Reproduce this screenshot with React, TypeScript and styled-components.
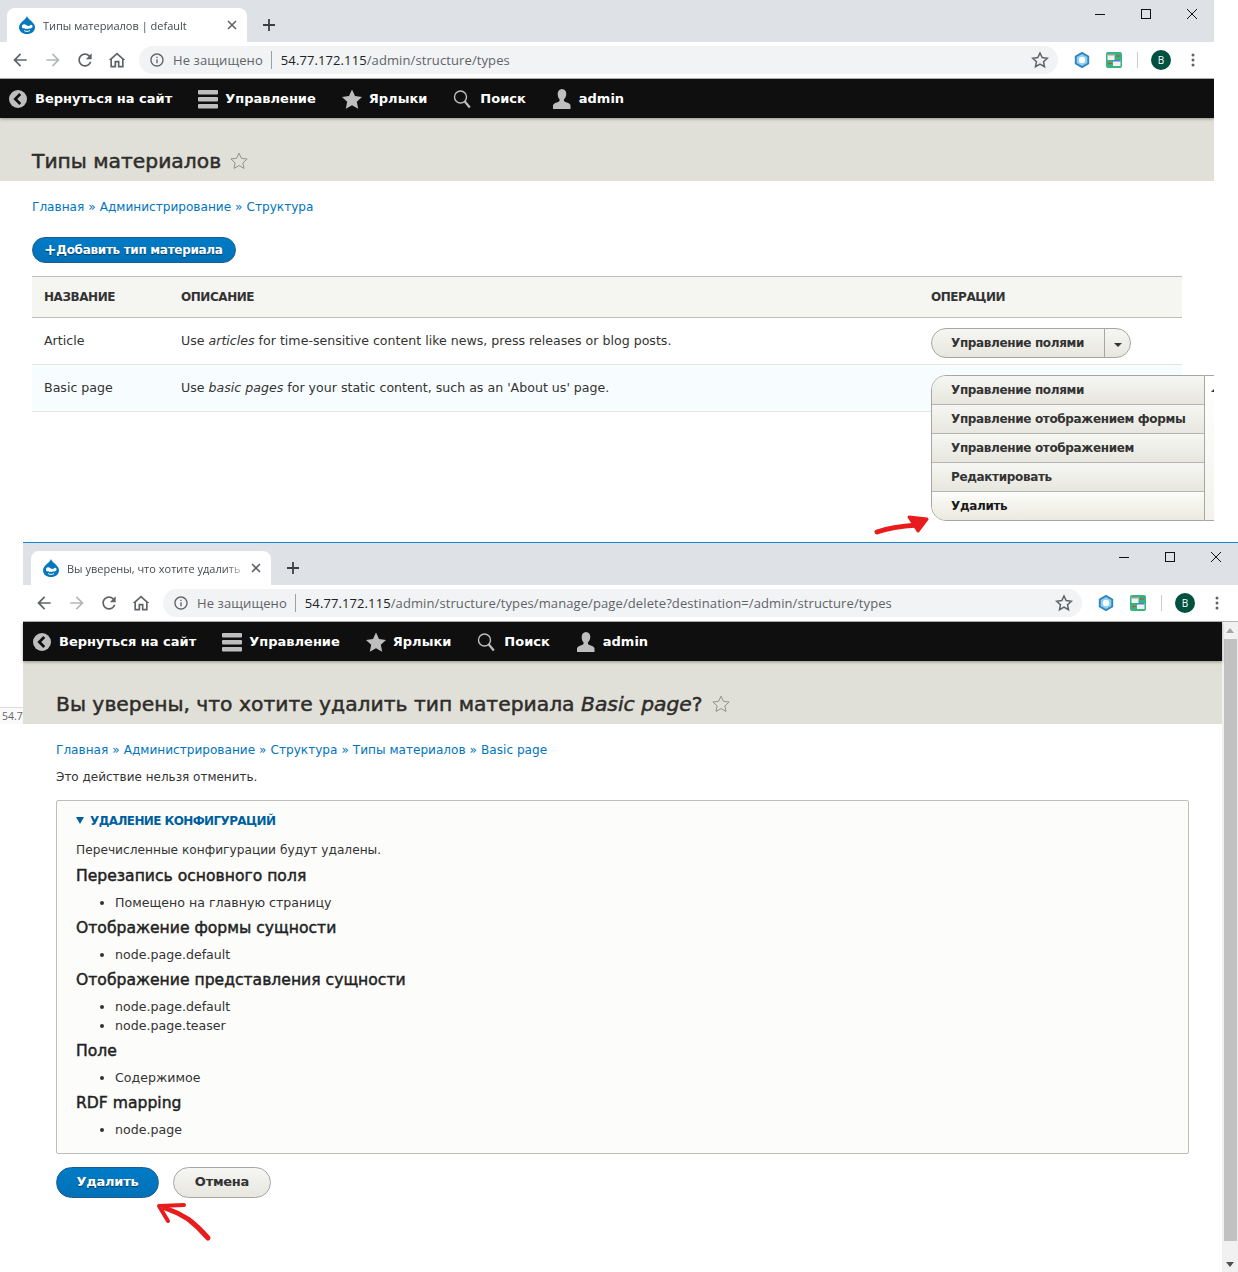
import React from 'react'
import styled, { createGlobalStyle } from 'styled-components'

const GlobalStyle = createGlobalStyle`
  html, body {
    margin: 0;
    padding: 0;
    background: #fff;
  }
  * {
    box-sizing: border-box;
  }
`

const Sheet = styled.div`
  position: relative;
  width: 1238px;
  height: 1272px;
  overflow: hidden;
  background: #fff;
  font-family: 'DejaVu Sans', Verdana, sans-serif;
  color: #333;
`

const BackWindow = styled.section`
  width: 1214px;
  height: 542px;
  overflow: hidden;
  display: flex;
  flex-direction: column;
`

const FrontWindow = styled.section`
  position: relative;
  width: 1215px;
  height: 730px;
  margin-left: 23px;
  border-top: 1px solid #0f86d8;
  display: flex;
  flex-direction: column;
  background: #fff;
`

const TabStrip = styled.div<{ $shift: number }>`
  flex: none;
  height: 42px;
  background: #dee1e6;
  display: flex;
  align-items: flex-end;
  padding-left: ${({ $shift }) => 7 + $shift}px;
`

const Tab = styled.div`
  width: 240px;
  height: 34px;
  background: #fff;
  border-radius: 8px 8px 0 0;
  display: flex;
  align-items: center;
  padding: 0 10px 0 12px;
  gap: 8px;
`

const TabTitle = styled.span`
  flex: 1;
  min-width: 0;
  font: 11px 'Open Sans', 'Noto Sans', sans-serif;
  color: #45494d;
  white-space: nowrap;
  overflow: hidden;
  -webkit-mask-image: linear-gradient(90deg, #000 90%, rgba(0, 0, 0, 0.25));
  mask-image: linear-gradient(90deg, #000 90%, rgba(0, 0, 0, 0.25));
`

const TabClose = styled.svg`
  flex: none;
  width: 10px;
  height: 10px;
  stroke: #5f6368;
  stroke-width: 1.6;
`

const NewTab = styled.svg`
  flex: none;
  width: 14px;
  height: 14px;
  margin: 0 0 10px 15px;
  stroke: #3c4043;
  stroke-width: 1.8;
`

const WindowControls = styled.div`
  margin-left: auto;
  align-self: flex-start;
  display: flex;
  padding-top: 8px;
  padding-right: 16px;
`

const WindowButton = styled.svg`
  width: 12px;
  height: 12px;
  stroke: #111;
  stroke-width: 1;
  fill: none;

  & + & {
    margin-left: 34px;
  }
`

const Toolbar = styled.div<{ $shift: number }>`
  flex: none;
  height: 37px;
  background: #fff;
  border-bottom: 1px solid #b5b5b5;
  display: flex;
  align-items: center;
  padding: 0 0 1px ${({ $shift }) => $shift}px;
`

const NavIcon = styled.svg<{ $tone?: string; $before: number }>`
  flex: none;
  width: 20px;
  height: 20px;
  margin-left: ${({ $before }) => $before}px;
  fill: ${({ $tone }) => $tone ?? '#5f6368'};
`

const Omnibox = styled.div`
  flex: none;
  width: 919px;
  height: 28px;
  margin-left: 12px;
  border-radius: 14px;
  background: #f1f3f4;
  display: flex;
  align-items: center;
  padding: 0 9px 0 10px;
  font: 13px 'Open Sans', 'Noto Sans', sans-serif;
  letter-spacing: 0.1px;
  color: #5f6368;
`

const InfoIcon = styled.svg`
  flex: none;
  width: 16px;
  height: 16px;
  margin-right: 8px;
`

const Divider = styled.span`
  width: 1px;
  height: 18px;
  background: #9aa0a6;
  margin: 0 9px 0 8px;
`

const Host = styled.span`
  color: #202124;
`

const OmniStar = styled.svg`
  flex: none;
  width: 18px;
  height: 18px;
  margin-left: auto;
  fill: none;
  stroke: #5f6368;
  stroke-width: 2;
`

const Extension = styled.svg`
  flex: none;
  width: 18px;
  height: 18px;
  margin-left: 15px;

  & + & {
    margin-left: 14px;
  }
`

const ToolbarSep = styled.span`
  width: 1px;
  height: 16px;
  background: #c9cbce;
  margin: 0 13px 0 14px;
`

const Avatar = styled.span`
  width: 20px;
  height: 20px;
  border-radius: 50%;
  background: #00513f;
  color: #fff;
  font: 10px 'Open Sans', sans-serif;
  display: flex;
  align-items: center;
  justify-content: center;
`

const KebabIcon = styled.svg`
  width: 4px;
  height: 14px;
  margin-left: 20px;
  fill: #5f6368;
`

const PageRow = styled.div`
  flex: 1;
  min-height: 0;
  display: flex;
`

const PageColumn = styled.div`
  flex: 1;
  min-width: 0;
  display: flex;
  flex-direction: column;
`

const AdminBar = styled.nav<{ $shift: number }>`
  flex: none;
  height: 39px;
  background: #0f0f0f;
  display: flex;
  align-items: center;
  padding-left: ${({ $shift }) => 9 + $shift}px;
  color: #fff;
  font-size: 13px;
  font-weight: 700;
  box-shadow: 0 1px 3px rgba(0, 0, 0, 0.35);
  position: relative;
`

const BarItem = styled.span<{ $gap: number; $after: number }>`
  display: flex;
  align-items: center;
  gap: ${({ $gap }) => $gap}px;
  margin-right: ${({ $after }) => $after}px;
  white-space: nowrap;
`

const BarIcon = styled.svg`
  flex: none;
  width: 20px;
  height: 20px;
  fill: #bebebe;
`

const PageHeader = styled.header<{ $inset: number }>`
  flex: none;
  height: 63px;
  background: #e0e0d8;
  padding: 23px 0 0 ${({ $inset }) => $inset}px;
  display: flex;
  align-items: center;
  gap: 8px;
`

const Title = styled.h1`
  margin: 0;
  font-size: 20.3px;
  line-height: 30px;
  font-weight: 400;
  color: #2f2d2b;
  -webkit-text-stroke: 0.5px #2f2d2b;
  white-space: nowrap;

  em {
    font-style: italic;
  }
`

const HeaderStar = styled.svg`
  flex: none;
  width: 20px;
  height: 20px;
  fill: none;
  stroke: #8b8b80;
  stroke-width: 1.1;
`

const Content = styled.main<{ $inset: number }>`
  flex: 1;
  padding: 0 ${({ $inset }) => $inset}px;
  font-size: 12.6px;
`

const Breadcrumb = styled.div`
  padding-top: 18px;
  font-size: 12.1px;
  line-height: 16px;
  color: #0074bd;
  white-space: nowrap;

  i {
    font-style: normal;
    margin: 0 4px;
  }
`

const AddButton = styled.a`
  display: flex;
  align-items: center;
  width: 204px;
  height: 26px;
  margin-top: 22px;
  padding: 0 0 0 11px;
  border-radius: 13px;
  border: 1px solid #1e5c90;
  background: linear-gradient(#007bc6, #0071b8);
  color: #fff;
  font-size: 12px;
  font-weight: 700;
  letter-spacing: -0.3px;
  white-space: nowrap;
  text-shadow: 0 1px 1px rgba(0, 0, 0, 0.5);

  b {
    font-size: 15px;
    margin-right: 0;
  }
`

const TypesTable = styled.table`
  width: 1150px;
  margin-top: 13px;
  border-collapse: collapse;
  table-layout: fixed;
`

const HeadCell = styled.th<{ $width?: number }>`
  width: ${({ $width }) => ($width ? `${$width}px` : 'auto')};
  height: 41px;
  padding: 0 12px;
  background: #f5f5f2;
  border-top: 1px solid #bfbfba;
  border-bottom: 1px solid #bfbfba;
  text-align: left;
  font-size: 12px;
  font-weight: 700;
  letter-spacing: -0.45px;
  color: #333;
`

const Row = styled.tr<{ $tinted?: boolean }>`
  height: 47px;
  background: ${({ $tinted }) => ($tinted ? '#f7fcff' : '#fff')};
  border-bottom: 1px solid #e6e4df;
`

const Cell = styled.td`
  padding: 0 12px 2px;
  color: #333;
  white-space: nowrap;
`

const OpsCell = styled.td`
  position: relative;
  padding: 4px 12px 0;
`

const DropButton = styled.div`
  display: flex;
  width: 200px;
  height: 30px;
  border: 1px solid #a6a6a6;
  border-radius: 15px;
  background: linear-gradient(#f6f6f3, #e7e7df);
  font-weight: 700;
  font-size: 12px;
  letter-spacing: -0.35px;
  color: #333;
  align-items: center;
`

const DropLabel = styled.span`
  flex: 1;
  padding-left: 19px;
  line-height: 28px;
  border-right: 1px solid #a6a6a6;
`

const DropCaret = styled.span`
  width: 25px;
  display: flex;
  justify-content: center;

  &::before {
    content: '';
    margin-top: 3px;
    border-style: solid;
    border-width: 4px 4px 0;
    border-color: #333 transparent transparent;
  }
`

const Menu = styled.div`
  position: absolute;
  left: 12px;
  top: 10px;
  z-index: 2;
  display: flex;
  height: 146px;
`

const MenuList = styled.ul`
  margin: 0;
  padding: 0;
  list-style: none;
  width: 274px;
  border: 1px solid #a6a6a6;
  border-radius: 15px 0 0 15px;
  overflow: hidden;
`

const MenuItem = styled.li<{ $active?: boolean }>`
  height: 29px;
  padding-left: 19px;
  line-height: 29px;
  font-weight: 700;
  font-size: 12px;
  letter-spacing: -0.35px;
  white-space: nowrap;
  color: ${({ $active }) => ($active ? '#1a1a1a' : '#333')};
  background: ${({ $active }) =>
    $active ? 'linear-gradient(#fcfcfa, #e9e9dd)' : 'linear-gradient(#f6f6f3, #e7e7df)'};
  border-bottom: 1px solid #b4b4b0;

  &:last-child {
    border-bottom: 0;
  }
`

const MenuRest = styled.div`
  width: 30px;
  padding: 12px 0 0 6px;
  border-top: 1px solid #a6a6a6;
  border-bottom: 1px solid #a6a6a6;
  background: linear-gradient(#ffffff, #f3f3ec);

  &::before {
    content: '';
    display: block;
    width: 0;
    border-style: solid;
    border-width: 0 4px 4px;
    border-color: transparent transparent #333;
  }
`

const Note = styled.p`
  margin: 11px 0 0;
  font-size: 12px;
  line-height: 16px;
  color: #333;
`

const Details = styled.div`
  width: 1133px;
  height: 354px;
  margin-top: 15px;
  padding: 11px 19px 0;
  border: 1px solid #bfbfba;
  border-radius: 2px;
  background: #fcfcfa;
`

const Summary = styled.div`
  display: flex;
  align-items: center;
  gap: 6px;
  height: 17px;
  color: #005f9e;
  font-size: 12px;
  font-weight: 700;
  letter-spacing: -0.6px;
  text-transform: uppercase;

  &::before {
    content: '';
    border-style: solid;
    border-width: 7px 4px 0;
    border-color: #005f9e transparent transparent;
  }
`

const DetailText = styled.p`
  margin: 13px 0 6px;
  font-size: 12.2px;
  line-height: 16px;
`

const GroupTitle = styled.h3`
  margin: 0;
  font-size: 15.6px;
  line-height: 25px;
  font-weight: 400;
  color: #222;
  -webkit-text-stroke: 0.45px #222;
`

const ItemList = styled.ul`
  margin: 4px 0;
  padding-left: 39px;

  li {
    line-height: 19px;
  }
`

const Actions = styled.div`
  display: flex;
  gap: 14px;
  margin-top: 13px;
`

const FormButton = styled.a<{ $primary?: boolean }>`
  display: flex;
  align-items: center;
  justify-content: center;
  width: ${({ $primary }) => ($primary ? '103px' : '98px')};
  height: 31px;
  padding-bottom: 2px;
  border-radius: 15.5px;
  border: 1px solid ${({ $primary }) => ($primary ? '#1e5c90' : '#a6a6a6')};
  background: ${({ $primary }) =>
    $primary ? 'linear-gradient(#007bc6, #0071b8)' : 'linear-gradient(#f6f6f3, #e7e7df)'};
  color: ${({ $primary }) => ($primary ? '#fff' : '#333')};
  font-size: 13px;
  font-weight: 700;
  letter-spacing: -0.25px;
  text-shadow: ${({ $primary }) => ($primary ? '0 1px 1px rgba(0, 0, 0, 0.5)' : 'none')};
`

const Scrollbar = styled.div`
  flex: none;
  width: 16px;
  background: #f1f1f1;
  display: flex;
  flex-direction: column;
  align-items: center;
  padding: 6px 0 5px;

  &::before,
  &::after {
    content: '';
    border-style: solid;
    border-color: transparent;
  }

  &::before {
    border-width: 0 4px 5px;
    border-bottom-color: #a3a3a3;
  }

  &::after {
    border-width: 5px 4px 0;
    border-top-color: #505050;
  }
`

const ScrollThumb = styled.div`
  flex: 1;
  width: 13px;
  margin: 6px 0 21px 1px;
  background: #c1c1c1;
`

const StatusPeek = styled.div`
  position: absolute;
  left: -23px;
  top: 164px;
  width: 23px;
  height: 17px;
  padding-left: 2px;
  border-top: 1px solid #dcdcdc;
  background: #fafafa;
  color: #666;
  font: 10.500px/17px 'Open Sans', sans-serif;
  white-space: nowrap;
`

const Annotation = styled.svg`
  position: absolute;
  left: 0;
  top: 0;
  width: 1238px;
  height: 1272px;
  pointer-events: none;
  z-index: 5;
  fill: none;
  stroke: #e81c1c;
  stroke-linecap: round;
  stroke-linejoin: round;
`

const STAR = 'M12 2.6l2.9 6.2 6.8.8-5 4.6 1.3 6.7-6-3.4-6 3.4 1.3-6.7-5-4.6 6.8-.8z'

function DrupalDrop() {
  return (
    <svg width="16" height="18" viewBox="0 0 16 18" style={{ flex: 'none' }}>
      <path d="M8 0c.6 2.4 3 3.6 4.8 5.6C14.6 7.500 16 9.300 16 11.400 16 15.100 12.500 18 8 18s-8-2.900-8-6.600c0-2.200 1.500-4 3.300-5.800C5.100 3.700 7.400 2.400 8 0z" fill="#0678be" />
      <path d="M3 9.500c1-1.500 3-1.500 4.500-.3 1.300 1 2.700 1 4-.2 1-.8 2.300.4 2 1.700-.4 1.500-2 2-3.500 1.500-.5.9-1.500 1-2 .2-1 .8-2 .6-2.500-.2-1.200.4-3 .2-2.500-2.700z" fill="#fff" />
      <path d="M5 14.500c1.800 1.200 4.200 1.200 6 0" stroke="#fff" strokeWidth="1" fill="none" />
    </svg>
  )
}

type BrowserBarsProps = {
  tabTitle: string
  host: string
  path: string
  shift: number
}

function BrowserBars({ tabTitle, host, path, shift }: BrowserBarsProps) {
  return (
    <>
      <TabStrip $shift={shift}>
        <Tab>
          <DrupalDrop />
          <TabTitle>{tabTitle}</TabTitle>
          <TabClose viewBox="0 0 10 10"><path d="M1 1l8 8M9 1l-8 8" /></TabClose>
        </Tab>
        <NewTab viewBox="0 0 14 14"><path d="M7 1v12M1 7h12" /></NewTab>
        <WindowControls>
          <WindowButton viewBox="0 0 12 12"><path d="M1 6.500h10" /></WindowButton>
          <WindowButton viewBox="0 0 12 12"><rect x="1.500" y="1.500" width="9" height="9" /></WindowButton>
          <WindowButton viewBox="0 0 12 12"><path d="M1 1l10 10M11 1L1 11" /></WindowButton>
        </WindowControls>
      </TabStrip>
      <Toolbar $shift={shift}>
        <NavIcon $before={10} viewBox="0 0 24 24"><path d="M20 11H7.830l5.590-5.590L12 4l-8 8 8 8 1.410-1.410L7.830 13H20v-2z" /></NavIcon>
        <NavIcon $before={13} viewBox="0 0 24 24" $tone="#b4b7bb"><path d="M4 11h12.170l-5.590-5.590L12 4l8 8-8 8-1.410-1.410L16.170 13H4v-2z" /></NavIcon>
        <NavIcon $before={12} viewBox="0 0 24 24"><path d="M17.650 6.350C16.200 4.900 14.210 4 12 4c-4.420 0-7.990 3.580-7.990 8s3.570 8 7.990 8c3.730 0 6.840-2.550 7.730-6h-2.080c-.82 2.330-3.040 4-5.650 4-3.310 0-6-2.690-6-6s2.690-6 6-6c1.660 0 3.140.69 4.220 1.780L13 11h7V4l-2.350 2.350z" /></NavIcon>
        <NavIcon $before={12} viewBox="0 0 24 24"><path d="M12 5.690l6 5.400V19h-3v-6H9v6H6v-7.910l6-5.400M12 3L2 12h2v9h7v-6h2v6h7v-9h2L12 3z" /></NavIcon>
        <Omnibox>
          <InfoIcon viewBox="0 0 24 24" fill="#5f6368">
            <path d="M11 7h2v2h-2zm0 4h2v6h-2zm1-9C6.480 2 2 6.480 2 12s4.480 10 10 10 10-4.480 10-10S17.520 2 12 2zm0 18c-4.410 0-8-3.590-8-8s3.590-8 8-8 8 3.590 8 8-3.590 8-8 8z" />
          </InfoIcon>
          Не защищено
          <Divider />
          <Host>{host}</Host>
          {path}
          <OmniStar viewBox="0 0 24 24"><path d={STAR} /></OmniStar>
        </Omnibox>
        <Extension viewBox="0 0 18 18">
          <path d="M9 .8l7.200 4.100v8.200L9 17.200l-7.200-4.100V4.900z" fill="#2f86c1" />
          <path d="M9 3l5.300 3v6L9 15l-5.300-3V6z" fill="#8fd0ee" />
          <circle cx="9" cy="9" r="3.200" fill="#fff" />
        </Extension>
        <Extension viewBox="0 0 18 18">
          <rect x="1" y="1" width="16" height="16" rx="2" fill="#36b37e" />
          <rect x="2.500" y="3" width="7" height="6" fill="#f2f2f2" />
          <rect x="2.500" y="3" width="7" height="1.500" fill="#9e9e9e" />
          <rect x="8" y="9" width="7.500" height="6" fill="#f2f2f2" />
          <rect x="8" y="9" width="7.500" height="1.500" fill="#4a7fd8" />
          <path d="M11 5h4M3 12.500h4" stroke="#e53935" strokeWidth="1.200" />
        </Extension>
        <ToolbarSep />
        <Avatar>B</Avatar>
        <KebabIcon viewBox="0 0 4 14">
          <circle cx="2" cy="2" r="1.500" />
          <circle cx="2" cy="7" r="1.500" />
          <circle cx="2" cy="12" r="1.500" />
        </KebabIcon>
      </Toolbar>
    </>
  )
}

function AdminToolbar({ shift }: { shift: number }) {
  return (
    <AdminBar $shift={shift}>
      <BarItem $gap={8} $after={26}>
        <BarIcon viewBox="0 0 20 20" style={{ width: 18, height: 18 }}>
          <circle cx="10" cy="10" r="10" />
          <path d="M12.500 4.500L7 10l5.500 5.500" fill="none" stroke="#0f0f0f" strokeWidth="3" />
        </BarIcon>
        Вернуться на сайт
      </BarItem>
      <BarItem $gap={7} $after={26}>
        <BarIcon viewBox="0 0 20 20">
          <rect y="1" width="20" height="4.500" rx="1" />
          <rect y="8" width="20" height="4.500" rx="1" />
          <rect y="15" width="20" height="4.500" rx="1" />
        </BarIcon>
        Управление
      </BarItem>
      <BarItem $gap={7} $after={26}>
        <BarIcon viewBox="0 0 20 20">
          <path d="M10 .5l3 6.600 7 .8-5.200 4.800 1.400 7L10 16.200l-6.200 3.500 1.400-7L0 7.900l7-.8z" />
        </BarIcon>
        Ярлыки
      </BarItem>
      <BarItem $gap={9} $after={26}>
        <BarIcon viewBox="0 0 18 20" style={{ width: 18 }}>
          <circle cx="7.500" cy="8" r="6" fill="none" stroke="#bebebe" strokeWidth="1.400" />
          <path d="M11.800 12.500l5 6" stroke="#bebebe" strokeWidth="2.200" />
        </BarIcon>
        Поиск
      </BarItem>
      <BarItem $gap={7} $after={0}>
        <BarIcon viewBox="0 0 20 20">
          <path d="M10 0c2.800 0 4.300 2.200 4.300 4.800 0 2.200-1 4.400-2.300 5.500-.5 1.600.4 2.400 2 3 2.200.8 4.500 1.600 4.500 3.200V20H1v-3.500c0-1.600 2.300-2.400 4.500-3.200 1.600-.6 2.500-1.400 2-3C6.200 9.200 5.700 7 5.700 4.800 5.700 2.200 7.200 0 10 0z" />
        </BarIcon>
        admin
      </BarItem>
    </AdminBar>
  )
}

const GROUPS: { title: string; items: string[] }[] = [
  { title: 'Перезапись основного поля', items: ['Помещено на главную страницу'] },
  { title: 'Отображение формы сущности', items: ['node.page.default'] },
  { title: 'Отображение представления сущности', items: ['node.page.default', 'node.page.teaser'] },
  { title: 'Поле', items: ['Содержимое'] },
  { title: 'RDF mapping', items: ['node.page'] },
]

const MENU_ITEMS = ['Управление полями', 'Управление отображением формы', 'Управление отображением', 'Редактировать']

export default function App() {
  return (
    <Sheet>
      <GlobalStyle />
      <BackWindow>
        <BrowserBars shift={0} tabTitle="Типы материалов | default" host="54.77.172.115" path="/admin/structure/types" />
        <AdminToolbar shift={0} />
        <PageHeader $inset={32}>
          <Title>Типы материалов</Title>
          <HeaderStar viewBox="0 0 24 24"><path d={STAR} /></HeaderStar>
        </PageHeader>
        <Content $inset={32}>
          <Breadcrumb>
            Главная<i>»</i>Администрирование<i>»</i>Структура
          </Breadcrumb>
          <AddButton><b>+</b>Добавить тип материала</AddButton>
          <TypesTable>
            <thead>
              <tr>
                <HeadCell $width={137}>НАЗВАНИЕ</HeadCell>
                <HeadCell $width={750}>ОПИСАНИЕ</HeadCell>
                <HeadCell>ОПЕРАЦИИ</HeadCell>
              </tr>
            </thead>
            <tbody>
              <Row>
                <Cell>Article</Cell>
                <Cell>Use <em>articles</em> for time-sensitive content like news, press releases or blog posts.</Cell>
                <OpsCell>
                  <DropButton>
                    <DropLabel>Управление полями</DropLabel>
                    <DropCaret />
                  </DropButton>
                </OpsCell>
              </Row>
              <Row $tinted>
                <Cell>Basic page</Cell>
                <Cell>Use <em>basic pages</em> for your static content, such as an 'About us' page.</Cell>
                <OpsCell>
                  <Menu>
                    <MenuList>
                      {MENU_ITEMS.map((item) => (
                        <MenuItem key={item}>{item}</MenuItem>
                      ))}
                      <MenuItem $active>Удалить</MenuItem>
                    </MenuList>
                    <MenuRest />
                  </Menu>
                </OpsCell>
              </Row>
            </tbody>
          </TypesTable>
        </Content>
      </BackWindow>

      <FrontWindow>
        <StatusPeek>54.7</StatusPeek>
        <BrowserBars
          shift={1}
          tabTitle="Вы уверены, что хотите удалить"
          host="54.77.172.115"
          path="/admin/structure/types/manage/page/delete?destination=/admin/structure/types"
        />
        <PageRow>
          <PageColumn>
            <AdminToolbar shift={1} />
            <PageHeader $inset={33}>
              <Title>Вы уверены, что хотите удалить тип материала <em>Basic page</em>?</Title>
              <HeaderStar viewBox="0 0 24 24"><path d={STAR} /></HeaderStar>
            </PageHeader>
            <Content $inset={33}>
              <Breadcrumb>
                Главная<i>»</i>Администрирование<i>»</i>Структура<i>»</i>Типы материалов<i>»</i>Basic page
              </Breadcrumb>
              <Note>Это действие нельзя отменить.</Note>
              <Details>
                <Summary>Удаление конфигураций</Summary>
                <DetailText>Перечисленные конфигурации будут удалены.</DetailText>
                {GROUPS.map((group) => (
                  <React.Fragment key={group.title}>
                    <GroupTitle>{group.title}</GroupTitle>
                    <ItemList>
                      {group.items.map((item) => (
                        <li key={item}>{item}</li>
                      ))}
                    </ItemList>
                  </React.Fragment>
                ))}
              </Details>
              <Actions>
                <FormButton $primary>Удалить</FormButton>
                <FormButton>Отмена</FormButton>
              </Actions>
            </Content>
          </PageColumn>
          <Scrollbar>
            <ScrollThumb />
          </Scrollbar>
        </PageRow>
      </FrontWindow>

      <Annotation viewBox="0 0 1238 1272">
        <path d="M877 532c14-5 26-6 40-7" strokeWidth="5" />
        <path d="M909 517l18 2-9 12z" strokeWidth="3" fill="#e81c1c" />
        <path d="M208 1238c-6-7-12-13-20-19-8-5-14-8-23-11" strokeWidth="5" />
        <path d="M168 1221l-9-15 25-1" strokeWidth="4" />
      </Annotation>
    </Sheet>
  )
}
